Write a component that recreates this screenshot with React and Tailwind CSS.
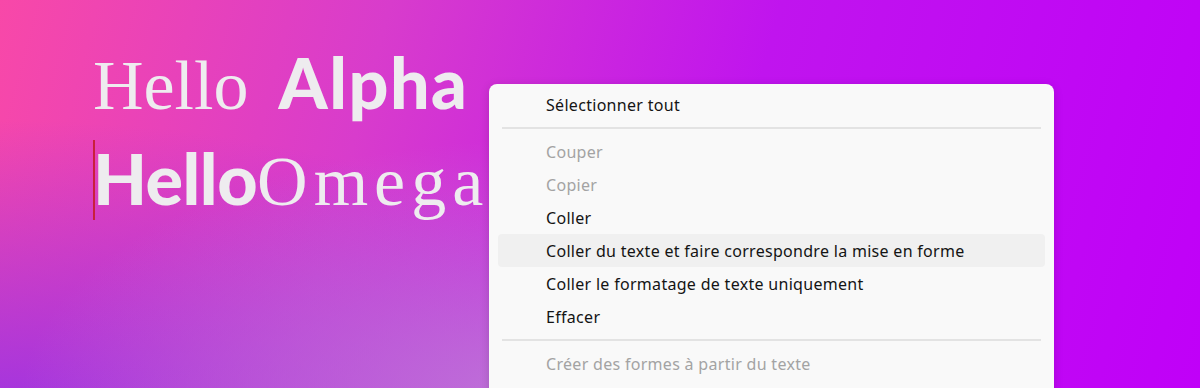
import React from "react";

const items = [
  { t: "Couper", d: true },
  { t: "Copier", d: true },
  { t: "Coller" },
  { t: "Coller du texte et faire correspondre la mise en forme", h: true },
  { t: "Coller le formatage de texte uniquement" },
  { t: "Effacer" },
];

function Row({ t, d, h }) {
  return (
    <div
      className={`mx-[9px] h-[33px] flex items-center pl-[48px] rounded-[4px] ${
        h ? "bg-[#f0f0f0]" : ""
      } ${d ? "text-[#a3a3a3]" : "text-[#141414]"}`}
    >
      {t}
    </div>
  );
}

function Sep() {
  return <div className="mx-[13px] my-[6px] h-[2px] bg-[#e3e3e3]" />;
}

export default function App() {
  return (
    <div className="relative w-[1200px] h-[388px] overflow-hidden bg-[radial-gradient(ellipse_520px_260px_at_540px_400px,rgba(190,120,215,0.95),rgba(190,120,215,0)_100%),radial-gradient(ellipse_700px_300px_at_0px_420px,rgba(150,50,230,0.9),rgba(150,50,230,0)_100%),linear-gradient(105deg,#f848a8_0%,#d83ccc_30%,#c014ee_60%,#c000f8_100%)]">
      <div className="pl-[93px] pt-[36px] flex flex-col text-[#eeecef] text-[70px] leading-[92px]">
        <div className="flex items-baseline">
          <span className="font-['Liberation_Serif',serif] font-normal">Hello</span>
          <span className="ml-[30px] font-['Lato',sans-serif] font-black tracking-[1.5px]">Alpha</span>
        </div>
        <div className="relative flex items-baseline">
          <span className="absolute left-0 top-[8px] w-[1.5px] h-[80px] bg-[#c8203c]" />
          <span className="font-['Lato',sans-serif] font-black tracking-[-0.5px]">Hello</span>
          <span className="font-['Liberation_Serif',serif] font-normal tracking-[6px]">Omega</span>
        </div>
      </div>

      <div className="absolute left-[489px] top-[84px] w-[565px] h-[330px] bg-[#f9f9f9] rounded-[8px] shadow-[0_2px_10px_rgba(0,0,0,0.15)] pt-[4px] font-['Noto_Sans',sans-serif] text-[16px] tracking-[0.3px]">
        <Row t="Sélectionner tout" />
        <Sep />
        {items.map((it) => (
          <Row key={it.t} {...it} />
        ))}
        <Sep />
        <Row t="Créer des formes à partir du texte" d />
      </div>
    </div>
  );
}
